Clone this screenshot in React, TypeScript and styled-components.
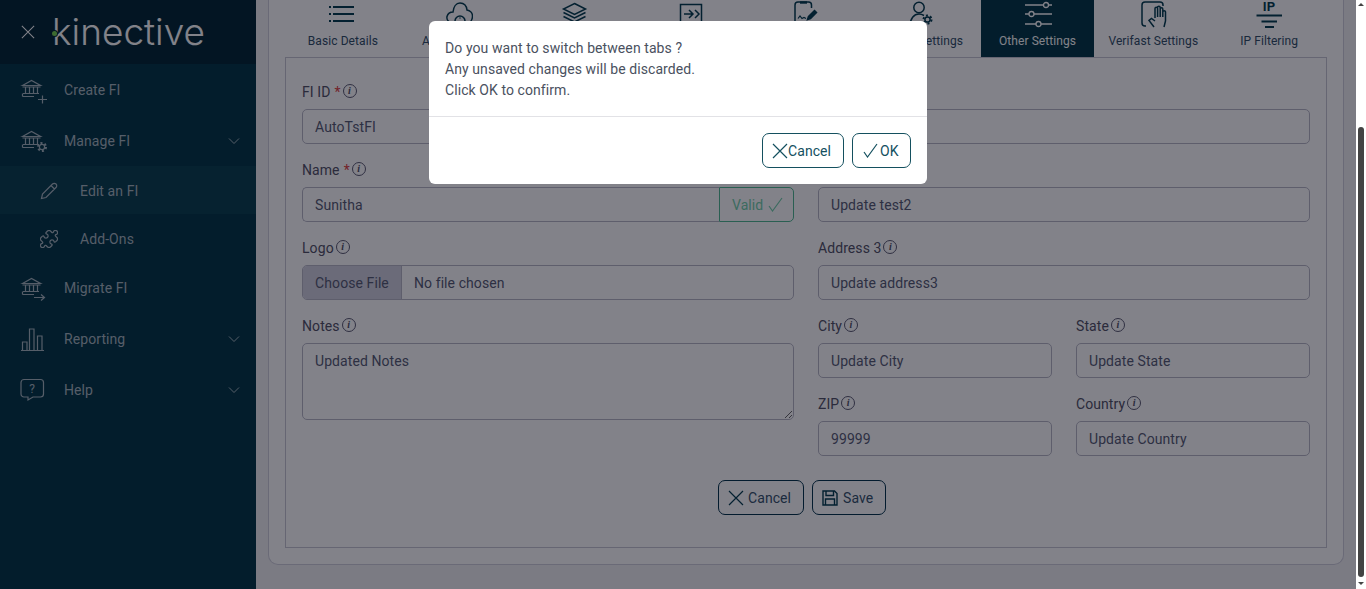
import React, { FC, ReactNode } from "react";
import styled, { createGlobalStyle } from "styled-components";

const GlobalStyle = createGlobalStyle`
  html, body { margin: 0; padding: 0; height: 100%; overflow: hidden; }
  body { font-family: Roboto, "Liberation Sans", sans-serif; font-size: 14px; letter-spacing: 0.08px; color: #505064; }
  * { box-sizing: border-box; }
`;

const Shell = styled.div`
  display: flex;
  width: 100%;
  height: 589px;
  background: #fff;
`;
const Viewport = styled.div`
  position: relative;
  flex: 1;
  display: flex;
  min-width: 0;
  overflow: hidden;
`;

/* ---- scrollbar ---- */
const ScrollTrack = styled.div`
  width: 10px;
  display: flex;
  flex-direction: column;
  align-items: center;
  padding: 3px 2px 3px 2px;
  background: #fff;
`;
const ScrollArrow = styled.div<{ $down?: boolean }>`
  width: 0;
  height: 0;
  border-left: 3px solid transparent;
  border-right: 3px solid transparent;
  ${(p) => (p.$down ? "border-top: 3px solid #444;" : "border-bottom: 3px solid #444;")}
`;
const ScrollSpace = styled.div`
  height: 121px;
`;
const ScrollThumb = styled.div`
  width: 6px;
  height: 450px;
  margin-bottom: 5px;
  border-radius: 3px;
  background: #434343;
`;

/* ---- sidebar ---- */
const Sidebar = styled.aside`
  width: 256px;
  flex: none;
  background: #003544;
  display: flex;
  flex-direction: column;
`;
const Brand = styled.div`
  height: 64px;
  background: #002533;
  display: flex;
  align-items: center;
  padding-left: 21px;
  color: #fff;
`;
const LogoText = styled.span`
  position: relative;
  margin-left: 17px;
  font-family: Inter, sans-serif;
  font-weight: 300;
  font-size: 37px;
  letter-spacing: 0;
  line-height: 40px;
  color: #ffffff;
`;
const LogoDot = styled.span`
  position: absolute;
  left: 0;
  top: 19px;
  width: 5px;
  height: 5px;
  border-radius: 50%;
  background: #74d04c;
  box-shadow: 0 0 0 1px #002533;
`;
const NavItem = styled.div<{ $sub?: boolean; $active?: boolean }>`
  height: ${(p) => (p.$sub ? 48 : 51)}px;
  display: flex;
  align-items: center;
  padding-left: ${(p) => (p.$sub ? 40 : 20)}px;
  padding-right: 16px;
  padding-top: ${(p) => (p.$sub ? 1 : 0)}px;
  color: #a6b6be;
  background: ${(p) => (p.$active ? "#073e4c" : "transparent")};
`;
const NavIconBox = styled.span<{ $sub?: boolean }>`
  width: ${(p) => (p.$sub ? 40 : 44)}px;
  flex: none;
  display: flex;
  align-items: center;
`;
const NavLabel = styled.span`
  flex: 1;
`;

const Line = styled.svg`
  display: block;
  flex: none;
  fill: none;
  stroke: currentColor;
  stroke-width: 1.2;
`;

const Chevron = () => (
  <Line width="12" height="8" viewBox="0 0 12 8" style={{ strokeWidth: 1 }}>
    <path d="M1 1.5 L6 6.5 L11 1.5" />
  </Line>
);

const Bank: FC<{ children?: ReactNode }> = ({ children }) => (
  <Line width="28" height="28" viewBox="0 0 28 28">
    <path d="M2.5 9.5 L11.5 4.5 L20.5 9.5 Z" />
    <path d="M2.5 11 H20.5 M5.5 11.5 V17 M9.5 11.5 V17 M13.5 11.5 V17 M17.5 11.5 V17" />
    <path d="M3 17.5 H19 M2.5 20.5 H14 M2.5 17.5 V20.5" />
    {children}
  </Line>
);

const Gear: FC<{ x: number; y: number }> = ({ x, y }) => (
  <g>
    <circle cx={x} cy={y} r="2.6" />
    <circle cx={x} cy={y} r="4" strokeWidth="2" strokeDasharray="2 2.2" />
  </g>
);

/* ---- main ---- */
const Main = styled.main`
  flex: 1;
  min-width: 0;
  background: #f1f1f2;
  padding: 0 12px 24px 12px;
  display: flex;
`;
const Card = styled.section`
  flex: 1;
  min-width: 0;
  background: #fff;
  border: 1px solid #cfcfdb;
  border-top: 0;
  border-radius: 0 0 10px 10px;
  padding: 0 16px 16px 16px;
  display: flex;
  flex-direction: column;
`;
const Tabs = styled.div`
  display: grid;
  grid-template-columns: repeat(9, 1fr);
  height: 57px;
  flex: none;
`;
const Tab = styled.div<{ $active?: boolean }>`
  display: flex;
  flex-direction: column;
  align-items: center;
  gap: 6px;
  margin: 0 1px;
  font-size: 12px;
  line-height: 14px;
  color: ${(p) => (p.$active ? "#ffffff" : "#2e4c64")};
  background: ${(p) => (p.$active ? "#003544" : "transparent")};
  white-space: nowrap;
  overflow: hidden;
  svg { color: ${(p) => (p.$active ? "#ffffff" : "#003a4c")}; }
`;
const Panel = styled.div`
  flex: 1;
  border: 1px solid #c6c6d2;
  padding: 23px 16px 0 16px;
`;
const FormGrid = styled.div`
  display: grid;
  grid-template-columns: 1fr 1fr;
  column-gap: 24px;
`;
const Column = styled.div`
  display: flex;
  flex-direction: column;
  min-width: 0;
`;
const HalfRow = styled.div`
  display: grid;
  grid-template-columns: 1fr 1fr;
  column-gap: 24px;
`;
const Field = styled.div`
  display: flex;
  flex-direction: column;
  margin-bottom: 15px;
  min-width: 0;
`;
const Label = styled.label`
  display: flex;
  align-items: center;
  height: 20px;
  padding-top: 2px;
  margin-bottom: 8px;
  color: #505064;
`;
const Required = styled.span`
  color: #e04040;
  margin-left: 4px;
`;
const Info = styled.span`
  width: 14px;
  height: 14px;
  margin: -3px 0 0 2px;
  border: 1px solid #5a5a70;
  border-radius: 50%;
  display: inline-flex;
  align-items: center;
  justify-content: center;
  font-family: "Liberation Serif", serif;
  font-style: italic;
  font-weight: 700;
  font-size: 10px;
  color: #505064;
`;
const TextInput = styled.input`
  width: 100%;
  min-width: 0;
  height: 35px;
  padding: 0 12px;
  border: 1px solid #b7b7c5;
  border-radius: 5px;
  background: #fff;
  color: #555a72;
  font: inherit;
  letter-spacing: inherit;
  outline: none;
`;
const GroupRow = styled.div`
  display: flex;
`;
const GroupInput = styled(TextInput)`
  flex: 1;
  border-radius: 5px 0 0 5px;
  border-right: 0;
`;
const ValidAddon = styled.div`
  width: 75px;
  flex: none;
  height: 35px;
  display: flex;
  align-items: center;
  gap: 5px;
  padding-left: 12px;
  border: 1px solid #4fb890;
  border-radius: 0 5px 5px 0;
  color: #74d0ac;
`;
const FileInput = styled.input`
  width: 100%;
  height: 35px;
  padding: 0;
  border: 1px solid #b7b7c5;
  border-radius: 5px;
  background: #fff;
  color: #555a72;
  font: inherit;
  letter-spacing: inherit;
  overflow: hidden;
  &::file-selector-button {
    height: 33px;
    width: 99px;
    margin: 0 12px 0 0;
    padding: 0;
    border: 0;
    border-right: 1px solid #b7b7c5;
    background: #d1d1df;
    color: #555a72;
    font: inherit;
    letter-spacing: inherit;
  }
`;
const NotesArea = styled.textarea`
  display: block;
  width: 100%;
  height: 77px;
  padding: 9px 12px;
  border: 1px solid #b7b7c5;
  border-radius: 5px;
  background: #fff;
  color: #555a72;
  font: inherit;
  letter-spacing: inherit;
  outline: none;
`;
const ButtonRow = styled.div`
  display: flex;
  justify-content: center;
  gap: 8px;
  margin-top: 9px;
  padding-right: 8px;
`;
const Button = styled.button<{ $teal?: boolean; $w: number; $gap: number; $pad: number }>`
  width: ${(p) => p.$w}px;
  height: 35px;
  display: flex;
  align-items: center;
  gap: ${(p) => p.$gap}px;
  padding: 0 0 0 ${(p) => p.$pad}px;
  background: #fff;
  border: 1px solid ${(p) => (p.$teal ? "#14505f" : "#003048")};
  border-radius: 7px;
  color: ${(p) => (p.$teal ? "#14505f" : "#33506a")};
  font: inherit;
  letter-spacing: inherit;
  svg { color: ${(p) => (p.$teal ? "#14505f" : "#003a4c")}; }
`;

/* ---- modal ---- */
const Backdrop = styled.div`
  position: absolute;
  inset: 0;
  background: rgba(5, 5, 20, 0.5);
  display: flex;
  justify-content: center;
  align-items: flex-start;
  padding-top: 21px;
`;
const Modal = styled.div`
  width: 498px;
  background: #fff;
  border-radius: 6px;
`;
const ModalBody = styled.div`
  padding: 17px 16px 15px;
  line-height: 21px;
  color: #4a5160;
  border-bottom: 1px solid #e2e2e6;
`;
const ModalFooter = styled.div`
  display: flex;
  justify-content: flex-end;
  gap: 8px;
  padding: 16px;
`;

const CrossIcon: FC<{ size?: number }> = ({ size = 16 }) => (
  <Line width={size} height={size} viewBox="0 0 16 16">
    <path d="M1 1 L15 15 M15 1 L1 15" />
  </Line>
);
const CheckIcon: FC<{ size?: number }> = ({ size = 15 }) => (
  <Line width={size} height={size} viewBox="0 0 15 15">
    <path d="M1 9 L4.5 14 L14 1" />
  </Line>
);
const SaveIcon = () => (
  <Line width="16" height="16" viewBox="0 0 16 16" style={{ strokeWidth: 1.4 }}>
    <path d="M1 1 H12.5 L15 3.5 V15 H1 Z" />
    <path d="M4 1 V5.5 H11.5 V1 M3.5 15 V9 H12.5 V15" />
  </Line>
);

const TabIcon: FC<{ children: ReactNode; w?: number }> = ({ children, w = 28 }) => (
  <Line width={w} height="28" viewBox={`0 0 ${w} 28`} style={{ strokeWidth: 1.5 }}>
    {children}
  </Line>
);

const FieldLabel: FC<{ text: string; required?: boolean }> = ({ text, required }) => (
  <Label>
    {text}
    {required && <Required>*</Required>}
    <Info>i</Info>
  </Label>
);

const PlainField: FC<{ label: string; value: string }> = ({ label, value }) => (
  <Field>
    <FieldLabel text={label} />
    <TextInput defaultValue={value} readOnly />
  </Field>
);

const tabs: { label: string; icon: ReactNode; active?: boolean }[] = [
  {
    label: "Basic Details",
    icon: (
      <>
        <path d="M4 7 H25 M4 14 H25 M4 21 H25" strokeWidth="1.8" />
        <path d="M0 7 H2 M0 14 H2 M0 21 H2" strokeWidth="1.8" />
      </>
    ),
  },
  {
    label: "Alert Settings",
    icon: (
      <>
        <path d="M7 23 C3 22 1.5 19 2 16.5 C3 13 5.5 12 8 12 C8.5 7 11 3 15 3 C19 3 21.5 6 22 10 C25 10.5 27.5 13 27.5 16 C27.5 20 25 22.5 23 23" />
        <circle cx="15" cy="21" r="5" />
        <path d="M15 17.5 V18.5" />
      </>
    ),
  },
  {
    label: "Product Setup",
    icon: (
      <>
        <path d="M14.5 3.5 L25.5 9 L14.5 14.5 L3.5 9 Z" />
        <path d="M3.5 12.5 L14.5 18 L25.5 12.5 M3.5 16.5 L14.5 22 L25.5 16.5" />
      </>
    ),
  },
  {
    label: "Integration",
    icon: (
      <>
        <path d="M4.5 28 V4.5 H25.5 V28" />
        <path d="M8 14 H17 M13 10 L17 14 L13 18 M19 10 L23 14 L19 18" />
      </>
    ),
  },
  {
    label: "Agreements",
    icon: (
      <>
        <path d="M19.5 8 V5 A3 3 0 0 0 16.5 2 H6 A3 3 0 0 0 3 5 V28" />
        <path d="M8 2.5 H15" strokeWidth="2.4" />
        <path d="M6 18.5 L8 16 L10 18.5 L12 17.5 L14 18.5" strokeWidth="1.2" />
        <path d="M16.5 16.5 L22.5 10.5 L24.5 12.5 L18.5 18.5 L15.5 19.5 Z" fill="currentColor" />
      </>
    ),
  },
  {
    label: "Admin Settings",
    icon: (
      <>
        <circle cx="11" cy="7.5" r="5.2" />
        <path d="M2 26 C2 18.5 6 14 11 14 C13 14 14.5 14.6 16 15.5" />
        <Gear x={19.5} y={19.5} />
      </>
    ),
  },
  {
    label: "Other Settings",
    active: true,
    icon: (
      <>
        <path d="M1 5 H19.5 M24.5 5 H28 M1 14 H5 M10 14 H28 M1 24 H12 M17 24 H28" strokeWidth="1.3" />
        <circle cx="22" cy="5" r="2.5" strokeWidth="1.3" />
        <circle cx="7.5" cy="14" r="2.5" strokeWidth="1.3" />
        <circle cx="14.5" cy="24" r="2.5" strokeWidth="1.3" />
      </>
    ),
  },
  {
    label: "Verifast Settings",
    icon: (
      <>
        <path d="M7 26 H6 A3 3 0 0 1 3 23 V5 A3 3 0 0 1 6 2 H21 A3 3 0 0 1 24 5 V6" />
        <path d="M16 18 V8.5 A1.3 1.3 0 0 1 18.6 8.5 V17 M18.6 7.5 A1.3 1.3 0 0 1 21.2 7.5 V17 M21.2 9 A1.3 1.3 0 0 1 23.8 9 V17 M23.8 12 A1.3 1.3 0 0 1 26.5 12 V21 L25 27" />
        <path d="M16 21 L12.5 18.5 L10 20.5 L15 27" />
      </>
    ),
  },
  {
    label: "IP Filtering",
    icon: (
      <>
        <text x="14" y="11" textAnchor="middle" fontFamily="Roboto, sans-serif" fontWeight="700" fontSize="13" fill="currentColor" stroke="none">
          IP
        </text>
        <path d="M1.5 15.5 H27 M6.5 21.5 H22 M10 27 H19" strokeWidth="1.8" />
      </>
    ),
  },
];

const App: FC = () => (
  <>
    <GlobalStyle />
    <Shell>
      <Viewport>
        <Sidebar>
          <Brand>
            <CrossIcon size={14} />
            <LogoText>
              kinective
              <LogoDot />
            </LogoText>
          </Brand>
          <NavItem>
            <NavIconBox>
              <Bank>
                <path d="M18 23.5 H27 M22.5 19.5 V27.5" />
              </Bank>
            </NavIconBox>
            <NavLabel>Create FI</NavLabel>
          </NavItem>
          <NavItem>
            <NavIconBox>
              <Bank>
                <Gear x={22} y={20} />
              </Bank>
            </NavIconBox>
            <NavLabel>Manage FI</NavLabel>
            <Chevron />
          </NavItem>
          <NavItem $sub $active>
            <NavIconBox $sub>
              <Line width="18" height="18" viewBox="0 0 18 18">
                <path d="M1.5 16.5 L2.5 12 L12.5 2 A2 2 0 0 1 16 5.5 L6 15.5 Z M11 3.5 L14.5 7" />
              </Line>
            </NavIconBox>
            <NavLabel>Edit an FI</NavLabel>
          </NavItem>
          <NavItem $sub>
            <NavIconBox $sub>
              <Line width="18" height="18" viewBox="1.5 1.5 21 21" style={{ strokeWidth: 1.4 }}>
                <path d="M15.39 4.39a1 1 0 0 0 1.68-.474 2.5 2.5 0 1 1 3.014 3.015 1 1 0 0 0-.474 1.68l1.683 1.682a2.414 2.414 0 0 1 0 3.414L19.61 15.39a1 1 0 0 1-1.68-.474 2.5 2.5 0 1 0-3.014 3.015 1 1 0 0 1 .474 1.68l-1.683 1.682a2.414 2.414 0 0 1-3.414 0L8.61 19.61a1 1 0 0 0-1.68.474 2.5 2.5 0 1 1-3.014-3.015 1 1 0 0 0 .474-1.68l-1.683-1.682a2.414 2.414 0 0 1 0-3.414L4.39 8.61a1 1 0 0 1 1.68.474 2.5 2.5 0 1 0 3.014-3.015 1 1 0 0 1-.474-1.68l1.683-1.682a2.414 2.414 0 0 1 3.414 0z" />
              </Line>
            </NavIconBox>
            <NavLabel>Add-Ons</NavLabel>
          </NavItem>
          <NavItem>
            <NavIconBox>
              <Bank>
                <path d="M14 23.5 H24 M21 20.5 L24.5 23.5 L21 26.5" />
              </Bank>
            </NavIconBox>
            <NavLabel>Migrate FI</NavLabel>
          </NavItem>
          <NavItem>
            <NavIconBox>
              <Line width="28" height="28" viewBox="0 0 28 28">
                <path d="M2.5 25 V17 H7 V25 M9.5 25 V4 H14 V25 M17.5 25 V11 H22 V25 M1 25.5 H24" />
              </Line>
            </NavIconBox>
            <NavLabel>Reporting</NavLabel>
            <Chevron />
          </NavItem>
          <NavItem>
            <NavIconBox>
              <Line width="28" height="28" viewBox="0 0 28 28">
                <path d="M4 3.5 H20.5 A3 3 0 0 1 23.5 6.5 V18 A3 3 0 0 1 20.5 21 H13 L8 24 V21 H4 A3 3 0 0 1 1 18 V6.5 A3 3 0 0 1 4 3.5 Z" />
                <text x="12.2" y="16.5" textAnchor="middle" fontFamily="Roboto, sans-serif" fontSize="12" fill="currentColor" stroke="none">
                  ?
                </text>
              </Line>
            </NavIconBox>
            <NavLabel>Help</NavLabel>
            <Chevron />
          </NavItem>
        </Sidebar>

        <Main>
          <Card>
            <Tabs>
              {tabs.map((t) => (
                <Tab key={t.label} $active={t.active}>
                  <TabIcon>{t.icon}</TabIcon>
                  {t.label}
                </Tab>
              ))}
            </Tabs>
            <Panel>
              <FormGrid>
                <Column>
                  <Field>
                    <FieldLabel text="FI ID" required />
                    <TextInput defaultValue="AutoTstFI" readOnly />
                  </Field>
                  <Field>
                    <FieldLabel text="Name" required />
                    <GroupRow>
                      <GroupInput defaultValue="Sunitha" readOnly />
                      <ValidAddon>
                        Valid
                        <CheckIcon />
                      </ValidAddon>
                    </GroupRow>
                  </Field>
                  <Field>
                    <FieldLabel text="Logo" />
                    <FileInput type="file" />
                  </Field>
                  <Field>
                    <FieldLabel text="Notes" />
                    <NotesArea defaultValue="Updated Notes" readOnly />
                  </Field>
                </Column>
                <Column>
                  <PlainField label="Address 1" value="" />
                  <PlainField label="Address 2" value="Update test2" />
                  <PlainField label="Address 3" value="Update address3" />
                  <HalfRow>
                    <PlainField label="City" value="Update City" />
                    <PlainField label="State" value="Update State" />
                    <PlainField label="ZIP" value="99999" />
                    <PlainField label="Country" value="Update Country" />
                  </HalfRow>
                </Column>
              </FormGrid>
              <ButtonRow>
                <Button $w={86} $gap={4} $pad={9}>
                  <CrossIcon />
                  Cancel
                </Button>
                <Button $w={74} $gap={5} $pad={9}>
                  <SaveIcon />
                  Save
                </Button>
              </ButtonRow>
            </Panel>
          </Card>
        </Main>

        <Backdrop>
          <Modal>
            <ModalBody>
              Do you want to switch between tabs ?
              <br />
              Any unsaved changes will be discarded.
              <br />
              Click OK to confirm.
            </ModalBody>
            <ModalFooter>
              <Button $teal $w={82} $gap={0} $pad={9}>
                <CrossIcon />
                Cancel
              </Button>
              <Button $teal $w={59} $gap={2} $pad={10}>
                <CheckIcon />
                OK
              </Button>
            </ModalFooter>
          </Modal>
        </Backdrop>
      </Viewport>
      <ScrollTrack>
        <ScrollArrow />
        <ScrollSpace />
        <ScrollThumb />
        <ScrollArrow $down />
      </ScrollTrack>
    </Shell>
  </>
);

export default App;
